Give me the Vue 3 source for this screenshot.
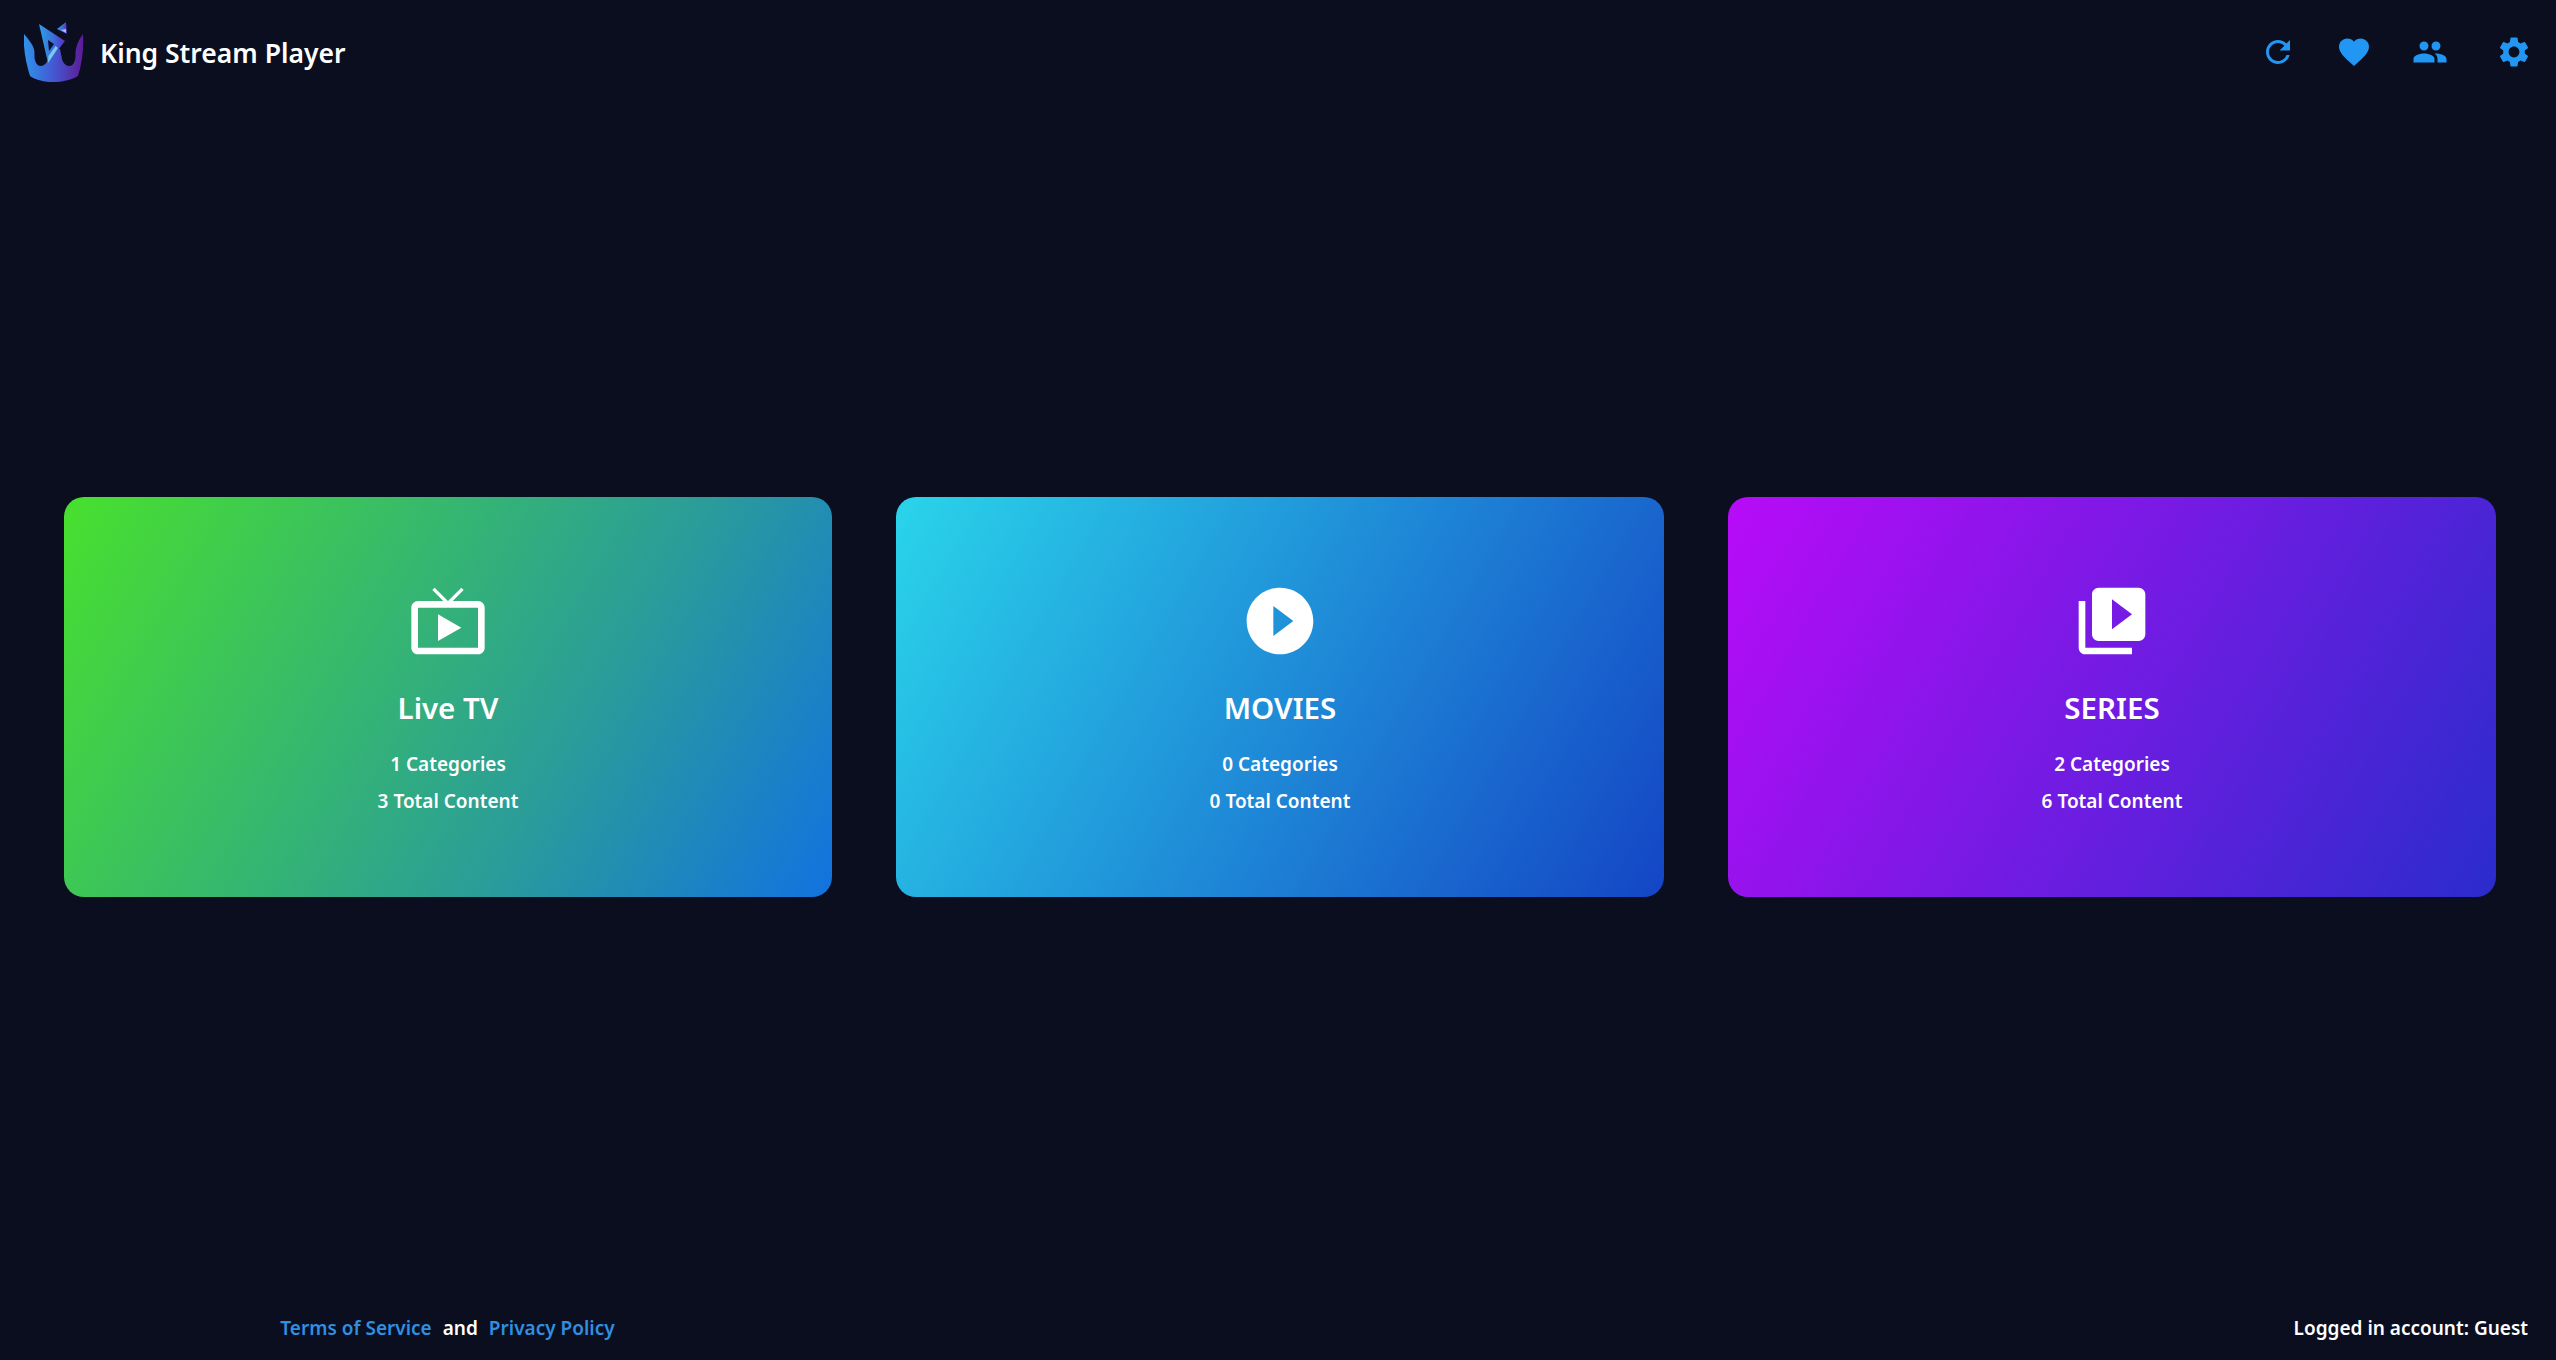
<script setup>
const cards = [
  { title: 'Live TV', cats: 1, total: 3, cls: 'live', path: 'M21 6h-7.59l3.29-3.29L16 2l-4 4-4-4-.71.71L10.59 6H3c-1.1 0-2 .89-2 2v12c0 1.1.9 2 2 2h18c1.1 0 2-.9 2-2V8c0-1.11-.9-2-2-2zm0 14H3V8h18v12zM9 10v8l7-4z' },
  { title: 'MOVIES', cats: 0, total: 0, cls: 'movies', path: 'M12 2C6.48 2 2 6.48 2 12s4.48 10 10 10 10-4.48 10-10S17.52 2 12 2zm-2 14.5v-9l6 4.5-6 4.5z' },
  { title: 'SERIES', cats: 2, total: 6, cls: 'series', path: 'M4 6H2v14c0 1.1.9 2 2 2h14v-2H4V6zm16-4H8c-1.1 0-2 .9-2 2v12c0 1.1.9 2 2 2h12c1.1 0 2-.9 2-2V4c0-1.1-.9-2-2-2zm-8 12.5v-9l6 4.5-6 4.5z' }
]
const actions = [
  { name: 'refresh', path: 'M17.65 6.35C16.2 4.9 14.21 4 12 4c-4.42 0-7.99 3.58-7.99 8s3.57 8 7.99 8c3.73 0 6.84-2.55 7.73-6h-2.08c-.82 2.33-3.04 4-5.65 4-3.31 0-6-2.69-6-6s2.69-6 6-6c1.66 0 3.14.69 4.22 1.78L13 11h7V4l-2.35 2.35z' },
  { name: 'favorite', path: 'M12 21.35l-1.45-1.32C5.4 15.36 2 12.28 2 8.5 2 5.42 4.42 3 7.5 3c1.74 0 3.41.81 4.5 2.09C13.09 3.81 14.76 3 16.5 3 19.58 3 22 5.42 22 8.5c0 3.78-3.4 6.86-8.55 11.54L12 21.35z' },
  { name: 'people', path: 'M16 11c1.66 0 2.99-1.34 2.99-3S17.66 5 16 5c-1.66 0-3 1.34-3 3s1.34 3 3 3zm-8 0c1.66 0 2.99-1.34 2.99-3S9.66 5 8 5C6.34 5 5 6.34 5 8s1.34 3 3 3zm0 2c-2.33 0-7 1.17-7 3.5V19h14v-2.5c0-2.33-4.67-3.5-7-3.5zm8 0c-.29 0-.62.02-.97.05 1.16.84 1.97 1.97 1.97 3.45V19h6v-2.5c0-2.33-4.67-3.5-7-3.5z' },
  { name: 'settings', path: 'M19.14 12.94c.04-.3.06-.61.06-.94 0-.32-.02-.64-.07-.94l2.03-1.58c.18-.14.23-.41.12-.61l-1.92-3.32c-.12-.22-.37-.29-.59-.22l-2.39.96c-.5-.38-1.03-.7-1.62-.94l-.36-2.54c-.04-.24-.24-.41-.48-.41h-3.84c-.24 0-.43.17-.47.41l-.36 2.54c-.59.24-1.13.57-1.62.94l-2.39-.96c-.22-.08-.47 0-.59.22L2.74 8.87c-.12.21-.08.47.12.61l2.03 1.58c-.05.3-.09.63-.09.94s.02.64.07.94l-2.03 1.58c-.18.14-.23.41-.12.61l1.92 3.32c.12.22.37.29.59.22l2.39-.96c.5.38 1.03.7 1.62.94l.36 2.54c.05.24.24.41.48.41h3.84c.24 0 .44-.17.47-.41l.36-2.54c.59-.24 1.13-.56 1.62-.94l2.39.96c.22.08.47 0 .59-.22l1.92-3.32c.12-.22.07-.47-.12-.61l-2.01-1.58zM12 15.6c-1.98 0-3.6-1.62-3.6-3.6s1.62-3.6 3.6-3.6 3.6 1.62 3.6 3.6-1.62 3.6-3.6 3.6z' }
]
</script>

<template>
  <div class="page">
    <header class="top">
      <div class="brand">
        <svg class="logo" viewBox="0 0 60 62" aria-hidden="true">
          <defs>
            <linearGradient id="crown" x1="0" y1="0" x2="1" y2="0">
              <stop offset="0" stop-color="#2f93ea" />
              <stop offset="0.5" stop-color="#4458d2" />
              <stop offset="1" stop-color="#5e1a96" />
            </linearGradient>
            <linearGradient id="tri" x1="0" y1="0" x2="1" y2="0">
              <stop offset="0" stop-color="#2f9fe8" />
              <stop offset="0.55" stop-color="#3a6fd8" />
              <stop offset="1" stop-color="#5a2cc4" />
            </linearGradient>
          </defs>
          <path fill="url(#crown)" d="M0 13 C4 18 8 22 10 28 C11 32 10 36 11 39 C12 43 14 45 17 45 C20 45 23 42 24 38 L26 28 L36 28 L38 38 C39 42 42 45 45 45 C48 45 50 43 51 39 C52 36 51 32 52 28 C53 22 56 17 59 13 C60 28 58 42 54 55 C40 63 18 63 6 55 C2 42 -1 28 0 13 Z" />
          <path fill="url(#tri)" d="M15 3 L41 20 L24 42 Z" />
          <path fill="#0b1030" d="M24 19 L30 23 L25 30 Z" />
          <path fill="#7cc8f2" d="M24 42 L34 27 L31.5 25 L24.5 35 Z" />
          <path fill="url(#tri)" d="M42 1 L43 13 L33 8 Z" />
          <path fill="#b9b6e6" d="M37 9 L42 8 L42 12 Z" />
        </svg>
        <span class="name">King Stream Player</span>
      </div>
      <nav class="actions">
        <button v-for="a in actions" :key="a.name" class="act" :class="a.name" type="button" :aria-label="a.name">
          <svg viewBox="0 0 24 24" class="act-icon"><path :d="a.path" /></svg>
        </button>
      </nav>
    </header>

    <main class="main">
      <section class="cards">
        <article v-for="c in cards" :key="c.title" class="card" :class="c.cls">
          <svg viewBox="0 0 24 24" class="card-icon"><path :d="c.path" /></svg>
          <h2 class="card-title">{{ c.title }}</h2>
          <p class="line first">{{ c.cats }} Categories</p>
          <p class="line">{{ c.total }} Total Content</p>
        </article>
      </section>
    </main>

    <footer class="foot">
      <div class="legal">
        <a class="link">Terms of Service</a>
        <span>and</span>
        <a class="link">Privacy Policy</a>
      </div>
      <div class="account">Logged in account: Guest</div>
    </footer>
  </div>
</template>

<style>
html, body { margin: 0; background: #0a0e1f; }
</style>

<style scoped>
.page {
  width: 2556px;
  height: 1360px;
  display: flex;
  flex-direction: column;
  background: #0a0e1f;
  color: #fff;
  font-family: "Noto Sans", "Open Sans", sans-serif;
  overflow: hidden;
}
.top {
  height: 104px;
  display: flex;
  align-items: center;
  justify-content: space-between;
  padding: 0 24px;
  flex: none;
}
.brand { display: flex; align-items: center; gap: 16px; }
.logo { width: 60px; height: 62px; display: block; }
.name { font-size: 26.5px; font-weight: 600; line-height: 36px; margin-top: 2px; }
.actions { display: flex; align-items: center; }
.act {
  width: 76px;
  height: 60px;
  padding: 0;
  background: none;
  border: 0;
  display: flex;
  align-items: center;
  justify-content: center;
}
.act.settings { margin-left: 8px; margin-right: -20px; }
.act-icon { width: 36px; height: 36px; fill: #2196f3; display: block; }
.main {
  flex: 1;
  display: flex;
  align-items: center;
  padding: 0 60px 4px 64px;
}
.cards {
  width: 100%;
  display: grid;
  grid-template-columns: repeat(3, 768px);
  justify-content: space-between;
}
.card {
  height: 400px;
  border-radius: 20px;
  display: flex;
  flex-direction: column;
  align-items: center;
  padding-top: 84px;
  box-sizing: border-box;
}
.live { background: linear-gradient(120deg, #48e02e 0%, #2a9c9a 65%, #1272e0 100%); }
.movies { background: linear-gradient(120deg, #2ad4ea 0%, #1445c5 100%); }
.series { background: linear-gradient(120deg, #b80bf8 0%, #2a2ccc 100%); }
.card-icon { width: 80px; height: 80px; fill: #fff; display: block; }
.card-title { margin: 27px 0 0; font-size: 29.5px; line-height: 40px; font-weight: 600; }
.line { margin: 0; font-size: 19px; font-weight: 600; line-height: 37px; }
.line.first { margin-top: 18px; }
.foot {
  flex: none;
  height: 66px;
  padding-top: 2px;
  box-sizing: border-box;
  display: flex;
  align-items: center;
  font-size: 19px;
  font-weight: 600;
}
.legal { width: 895px; display: flex; justify-content: center; gap: 11px; }
.link { color: #2f8fe0; }
.account { margin-left: auto; padding-right: 28px; }
</style>
